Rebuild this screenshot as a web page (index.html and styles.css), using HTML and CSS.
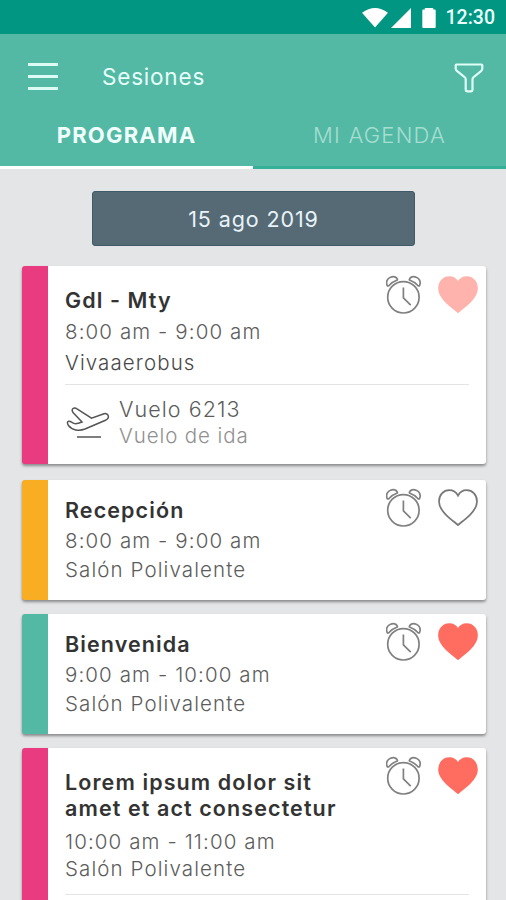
FILE: index.html
```html
<!DOCTYPE html>
<html lang="es">
<head>
    <meta charset="UTF-8">
    <meta name="viewport" content="width=device-width, initial-scale=1.0">
    <title>Sesiones</title>
    <link rel="stylesheet" href="styles.css">
</head>
<body>
    <!-- iconos reutilizados en las tarjetas -->
    <svg class="sprite" width="0" height="0">
        <symbol id="clock" viewBox="0 0 36 40">
            <circle cx="17.4" cy="22.3" r="15.7"/>
            <path d="M17.400 12.500V22.800L24.700 30.200"/>
            <path d="M1.200 10.500C-.5 6.500 1.500 3.500 4.500 2.300C7.500 1 10.500 1.800 11.400 4.200Q11.700 5 10.800 5.300C7.500 6.500 5.300 8 3.200 10.300Q1.800 11.600 1.200 10.500Z"/>
            <path d="M33.600 10.500C35.300 6.500 33.300 3.500 30.300 2.300C27.300 1 24.300 1.800 23.400 4.200Q23.100 5 24 5.300C27.300 6.500 29.500 8 31.600 10.300Q33 11.600 33.600 10.500Z"/>
        </symbol>
        <symbol id="heart" viewBox="0 0 40 37">
            <path d="M20 36C17.500 33.800 12 29.800 8 25.800C3.500 21.300 1 17.500 1 12.500C1 6 5.500 1.200 11.200 1.200C15 1.200 18.200 3.200 20 6.600C21.800 3.200 25 1.200 28.800 1.200C34.500 1.200 39 6 39 12.500C39 17.500 36.500 21.300 32 25.800C28 29.800 22.500 33.800 20 36Z"/>
        </symbol>
    </svg>

    <div class="status-bar">
        <svg class="wifi" width="26" height="20" viewBox="0 0 26 20"><path d="M0 4.800Q13 -4.800 26 4.800L13 19.600Z"/></svg>
        <svg class="signal" width="20" height="20" viewBox="0 0 20 20"><path d="M20 0V20H0Z"/></svg>
        <svg class="battery" width="14" height="20" viewBox="0 0 14 20"><path d="M2.800 0H11.200V1.500H12.800Q13.700 1.500 13.700 2.500V19Q13.700 20 12.800 20H1.200Q.3 20 .3 19V2.500Q.3 1.500 1.200 1.500H2.800Z"/></svg>
        <span class="time">12:30</span>
    </div>

    <div class="header">
        <div class="toolbar">
            <div class="menu">
                <span></span>
                <span></span>
                <span></span>
            </div>
            <div class="page-title">Sesiones</div>
            <svg class="filter" width="30" height="30" viewBox="0 0 30 30"><path d="M2.500 1.500H27.500Q28.300 1.500 28.300 2.300V5.500Q28.300 7 27 8.200L19.200 14.500Q18.500 15.200 18.500 16.500V26.500Q18.500 28.300 16.800 28.300H13.600Q11.700 28.300 11.700 26.500V16.500Q11.700 15.200 11 14.500L3.200 8.200Q1.700 7 1.700 5.500V2.300Q1.700 1.500 2.500 1.500Z"/></svg>
        </div>
        <div class="tabs">
            <div class="tab active">PROGRAMA</div>
            <div class="tab">MI AGENDA</div>
        </div>
    </div>

    <div class="content">
        <div class="date">15 ago 2019</div>

        <div class="card pink flight">
            <div class="info">
                <div class="title">Gdl - Mty</div>
                <div class="hour">8:00 am - 9:00 am</div>
                <div class="place carrier">Vivaaerobus</div>
                <div class="extra">
                    <svg class="plane" width="44" height="36" viewBox="0 0 44 36">
                        <path d="M6.500 4C8 2.500 9.500 2.700 11 3.800L25.500 13.200L38 8.800C40 8.200 41.800 9.200 42.300 11C42.800 13 41.500 14.300 39.500 15.200L19 24C13 26.300 6 25.300 2.500 20.500C1 18.200 1 16.500 2.800 16.200C5.500 16 6.500 18.800 9.500 18.700C12 18.600 14 17.800 16 17L7 7.500C6 6 5.700 5 6.500 4Z"/>
                        <path d="M11 32H35"/>
                    </svg>
                    <div>
                        <div class="flight-number">Vuelo 6213</div>
                        <div class="flight-type">Vuelo de ida</div>
                    </div>
                </div>
            </div>
            <div class="actions">
                <svg class="clock" width="36" height="40"><use href="#clock"/></svg>
                <svg class="heart faded" width="40" height="37"><use href="#heart"/></svg>
            </div>
        </div>

        <div class="card orange">
            <div class="info">
                <div class="title">Recepción</div>
                <div class="hour">8:00 am - 9:00 am</div>
                <div class="place">Salón Polivalente</div>
            </div>
            <div class="actions">
                <svg class="clock" width="36" height="40"><use href="#clock"/></svg>
                <svg class="heart" width="40" height="37"><use href="#heart"/></svg>
            </div>
        </div>

        <div class="card green">
            <div class="info">
                <div class="title">Bienvenida</div>
                <div class="hour">9:00 am - 10:00 am</div>
                <div class="place">Salón Polivalente</div>
            </div>
            <div class="actions">
                <svg class="clock" width="36" height="40"><use href="#clock"/></svg>
                <svg class="heart liked" width="40" height="37"><use href="#heart"/></svg>
            </div>
        </div>

        <div class="card pink long">
            <div class="info">
                <div class="title">Lorem ipsum dolor sit<br>amet et act consectetur</div>
                <div class="hour">10:00 am - 11:00 am</div>
                <div class="place">Salón Polivalente</div>
                <div class="extra"></div>
            </div>
            <div class="actions">
                <svg class="clock" width="36" height="40"><use href="#clock"/></svg>
                <svg class="heart liked" width="40" height="37"><use href="#heart"/></svg>
            </div>
        </div>
    </div>
</body>
</html>
```
FILE: styles.css
```css
* {
    box-sizing: border-box;
}
body {
    margin: 0;
    height: 900px;
    overflow: hidden;
    background: #e3e5e7;
    font-family: Inter, "Liberation Sans", sans-serif;
    color: #5c5c5c;
}
.sprite {
    position: absolute;
}
.status-bar {
    height: 34px;
    padding: 1px 11px 0 0;
    background: #009681;
    display: flex;
    align-items: center;
    justify-content: flex-end;
    color: #e9fffb;
}
.status-bar svg {
    fill: #fff;
}
.signal {
    margin-left: 3px;
}
.battery {
    margin-left: 11px;
}
.status-bar .time {
    margin-left: 10px;
    font-family: Roboto, sans-serif;
    font-size: 19.5px;
    font-weight: 500;
}
.header {
    height: 135px;
    background: #53b8a4;
    color: #e6fff9;
}
.toolbar {
    height: 84px;
    padding: 0 22px 0 28px;
    display: flex;
    align-items: center;
}
.menu {
    width: 30px;
    height: 27px;
    display: flex;
    flex-direction: column;
    justify-content: space-between;
}
.menu span {
    height: 3px;
    background: #dcfbf4;
}
.page-title {
    margin-left: 44px;
    padding-top: 1px;
    font-size: 22.5px;
    letter-spacing: 0.8px;
}
.filter {
    margin-left: auto;
    margin-top: 3px;
    fill: none;
    stroke: #e0fff8;
    stroke-width: 2.2;
}
.tabs {
    height: 51px;
    display: flex;
}
.tab {
    width: 50%;
    padding-top: 3px;
    border-bottom: 3px solid #35b197;
    text-align: center;
    font-size: 22px;
    line-height: 28px;
    font-weight: 350;
    letter-spacing: 1.2px;
    color: #a5dfd1;
}
.tab.active {
    border-color: #fff;
    font-weight: 700;
    color: #f0fffc;
}
.content {
    padding: 22px 20px 0 22px;
}
.date {
    width: 323px;
    height: 55px;
    margin: 0 auto 20px 70px;
    background: #556a75;
    border: 1px solid #3e5b67;
    border-radius: 3px;
    text-align: center;
    font-size: 21.5px;
    line-height: 55px;
    letter-spacing: 0.9px;
    color: #e8f3f9;
}
.card {
    height: 120px;
    margin-bottom: 14px;
    padding: 15px 0 0 17px;
    background: #fff;
    border-left: 26px solid #53b8a4;
    border-radius: 3px;
    box-shadow: 0 2px 3px rgba(0, 0, 0, 0.4);
    position: relative;
}
.card.pink {
    border-color: #e83b80;
}
.card.orange {
    border-color: #f8ad22;
}
.info {
    width: 404px;
}
.title {
    font-size: 21.5px;
    line-height: 31px;
    font-weight: 570;
    letter-spacing: 1.1px;
    color: #333;
}
.hour, .place {
    font-size: 20.5px;
    line-height: 29px;
    font-weight: 320;
    letter-spacing: 1.1px;
}
.actions {
    position: absolute;
    top: 8px;
    right: 8px;
    display: flex;
    gap: 16px;
}
.clock {
    fill: none;
    stroke: #808080;
    stroke-width: 1.7;
}
.heart {
    margin-top: 1px;
    fill: none;
    stroke: #777;
    stroke-width: 1.7;
}
.heart.faded {
    fill: #ffb3ac;
    stroke: #ffb3ac;
}
.heart.liked {
    fill: #ff6c60;
    stroke: #ff6c60;
}
.flight {
    height: 198px;
    margin-bottom: 16px;
    padding-top: 19px;
}
.flight .hour, .flight .carrier {
    line-height: 31px;
}
.flight .carrier {
    color: #484848;
}
.flight .actions {
    top: 9px;
}
.extra {
    margin-top: 6px;
    padding-top: 11px;
    border-top: 1px solid #e4e4e4;
    display: flex;
}
.plane {
    margin: 9px 9px 0 1px;
    fill: none;
    stroke: #555;
    stroke-width: 1.5;
}
.flight-number {
    font-size: 21.5px;
    line-height: 27px;
    font-weight: 320;
    letter-spacing: 1.05px;
}
.flight-type {
    font-size: 20.5px;
    line-height: 25px;
    font-weight: 300;
    letter-spacing: 0.9px;
    color: #909090;
}
.long {
    height: 220px;
    padding-top: 21px;
}
.long .title {
    line-height: 26px;
    margin-bottom: 7px;
}
.long .hour, .long .place {
    line-height: 27px;
}
.long .extra {
    margin-top: 12px;
}
```
